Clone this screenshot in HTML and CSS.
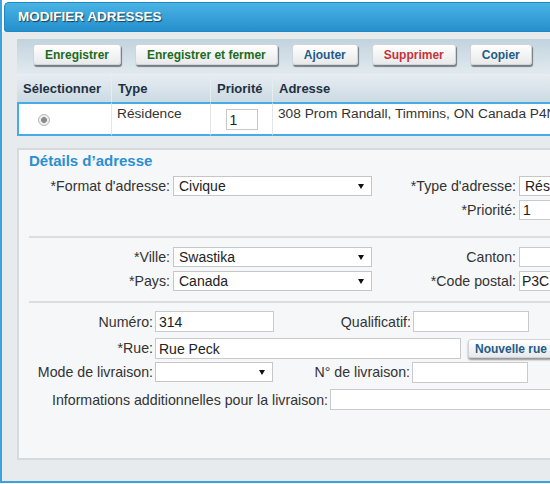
FILE: index.html
```html
<!DOCTYPE html>
<html lang="fr">
<head>
<meta charset="utf-8">
<title>Modifier adresses</title>
<link rel="stylesheet" href="styles.css">
</head>
<body>
<div class="dialog">
  <div class="titlebar">MODIFIER ADRESSES</div>
  <div class="dialog-body">
    <div class="toolbar">
      <button class="btn green">Enregistrer</button>
      <button class="btn green">Enregistrer et fermer</button>
      <button class="btn blue">Ajouter</button>
      <button class="btn red">Supprimer</button>
      <button class="btn blue">Copier</button>
    </div>
    <table class="grid">
      <colgroup>
        <col class="col-sel"><col class="col-type"><col class="col-prio"><col class="col-addr">
      </colgroup>
      <thead>
        <tr><th>Sélectionner</th><th>Type</th><th>Priorité</th><th>Adresse</th></tr>
      </thead>
      <tbody>
        <tr>
          <td class="cell-sel"><span class="radio"></span></td>
          <td class="cell-text">Résidence</td>
          <td class="cell-prio"><input class="prio-input" type="text" value="1"></td>
          <td class="cell-text">308 Prom Randall, Timmins, ON Canada P4N 3A8</td>
        </tr>
      </tbody>
    </table>

    <div class="details">
      <h2 class="details-title">Détails d’adresse</h2>

      <div class="row ga first">
        <div class="lbl l1">*Format d'adresse:</div>
        <div class="select c1"><span>Civique</span><span class="caret"></span></div>
        <div class="lbl l2">*Type d'adresse:</div>
        <div class="select c2"><span>Résidence</span><span class="caret"></span></div>
      </div>
      <div class="row ga next">
        <div class="lbl l2 push">*Priorité:</div>
        <input class="field c2" type="text" value="1">
      </div>

      <div class="sep sep1"></div>

      <div class="row ga first2">
        <div class="lbl l1">*Ville:</div>
        <div class="select c1"><span>Swastika</span><span class="caret"></span></div>
        <div class="lbl l2">Canton:</div>
        <input class="field c2" type="text" value="">
      </div>
      <div class="row ga next">
        <div class="lbl l1">*Pays:</div>
        <div class="select c1"><span>Canada</span><span class="caret"></span></div>
        <div class="lbl l2">*Code postal:</div>
        <input class="field c2 tight" type="text" value="P3C 1X7">
      </div>

      <div class="sep sep2"></div>

      <div class="row gb r5">
        <div class="lbl l1">Numéro:</div>
        <input class="field c1" type="text" value="314">
        <div class="lbl l2">Qualificatif:</div>
        <input class="field c2" type="text" value="">
      </div>
      <div class="row gb r6">
        <div class="lbl l1">*Rue:</div>
        <input class="field street" type="text" value="Rue Peck">
        <button class="btn blue small">Nouvelle rue</button>
      </div>
      <div class="row gb r7">
        <div class="lbl l1">Mode de livraison:</div>
        <div class="select c1 mode"><span></span><span class="caret"></span></div>
        <div class="lbl l2">N° de livraison:</div>
        <input class="field c2" type="text" value="">
      </div>
      <div class="row gb r8">
        <div class="lbl linfo">Informations additionnelles pour la livraison:</div>
        <input class="field info" type="text" value="">
      </div>
    </div>
  </div>
</div>
</body>
</html>
```

FILE: styles.css
```css
html, body {
  margin: 0;
  padding: 0;
  overflow: hidden;
  background: #ffffff;
}

body {
  width: 550px;
  height: 484px;
  font-family: "Liberation Sans", Arial, sans-serif;
}

.dialog {
  width: 700px;
  height: 483px;
  box-sizing: border-box;
  border-left: 2px solid #3ca2dc;
  border-bottom: 2px solid #3ca2dc;
  padding-top: 2px;
  display: flex;
  flex-direction: column;
  background: #ffffff;
}

.titlebar {
  flex: none;
  margin-left: 2px;
  height: 30px;
  box-sizing: border-box;
  border: 1px solid #1f87c2;
  border-right: none;
  border-radius: 5px 0 0 3px;
  background: linear-gradient(#4ab3e4, #2590cd);
  color: #ffffff;
  font-weight: bold;
  font-size: 13.5px;
  line-height: 28px;
  padding-left: 13px;
  text-shadow: 1px 1px 1px rgba(0, 0, 0, 0.6);
}

.dialog-body {
  flex: 1;
  background: #e8ebee;
  padding: 7px 0 0 15px;
}

.toolbar {
  height: 35px;
  box-sizing: border-box;
  padding: 5px 0 0 16px;
  display: flex;
  align-items: flex-start;
  gap: 14px;
  background: linear-gradient(#c1d3de, #e2eaef);
}

.btn {
  height: 21px;
  padding: 0 11px;
  border: 1px solid #cfd5da;
  border-radius: 3px;
  background: linear-gradient(#ffffff, #e8e9ea);
  font: bold 12px "Liberation Sans", Arial, sans-serif;
  box-shadow: 1px 2px 1px rgba(0, 0, 0, 0.45);
  white-space: nowrap;
}

.btn.green { color: #1c6b1f; }
.btn.blue { color: #1f5c87; }
.btn.red { color: #c5323a; }

.btn.small {
  height: 19px;
  margin-left: 7px;
  padding: 0 6px;
  align-self: flex-start;
  margin-top: 1px;
  box-shadow: 0 2px 2px rgba(0, 0, 0, 0.4);
}

.grid {
  border-collapse: separate;
  border-spacing: 0;
  table-layout: fixed;
  width: 683px;
}

.col-sel { width: 94px; }
.col-type { width: 99px; }
.col-prio { width: 62px; }

.grid th {
  height: 28px;
  box-sizing: border-box;
  padding: 0 6px;
  text-align: left;
  font: bold 13px "Liberation Sans", Arial, sans-serif;
  color: #1d3142;
  background: linear-gradient(#e6edf1, #ccdae3);
  border-top: 1px solid #e8eef2;
  border-left: 1px solid #e6edf1;
  white-space: nowrap;
}

.grid th:first-child {
  border-left: none;
  padding-left: 6px;
}

.grid td {
  height: 34px;
  box-sizing: border-box;
  background: #ffffff;
  border-top: 2px solid #45ace6;
  border-bottom: 2px solid #45ace6;
  border-left: 1px solid #e3e6e8;
  font-size: 13.7px;
  color: #333333;
  white-space: nowrap;
  overflow: hidden;
}

.grid td:first-child {
  border-left: 2px solid #45ace6;
}

.cell-text {
  vertical-align: top;
  padding: 2px 5px 0 5px;
  line-height: 16px;
}

.cell-sel {
  padding: 0 0 0 19px;
  vertical-align: middle;
}

.radio {
  display: block;
  width: 12px;
  height: 12px;
  box-sizing: border-box;
  border-radius: 50%;
  border: 1px solid #b4b4b4;
  background: radial-gradient(circle, #8b8b8b 0 2.6px, #e9e9e9 3.2px, #f5f5f5 6px);
  margin-top: 1px;
}

.cell-prio {
  text-align: center;
  vertical-align: middle;
  padding: 1px 0 0 0;
}

.prio-input {
  width: 32px;
  height: 21px;
  box-sizing: border-box;
  border: 1px solid #c8c8c8;
  padding: 0 3px;
  font: 14px "Liberation Sans", Arial, sans-serif;
  color: #222222;
  vertical-align: middle;
}

.details {
  margin-top: 12px;
  height: 312px;
  box-sizing: border-box;
  border: 2px solid #d7dadd;
  border-right: none;
  background: #f6f7f8;
}

.details-title {
  margin: 2px 0 0 10px;
  font: bold 15px/18px "Liberation Sans", Arial, sans-serif;
  color: #2b8fd2;
}

.row {
  display: flex;
  align-items: center;
  height: 20px;
}

.lbl {
  flex: none;
  box-sizing: border-box;
  text-align: right;
  font-size: 14.2px;
  color: #333333;
  white-space: nowrap;
  line-height: 20px;
}

.ga .l1 { width: 154px; padding-right: 3px; }
.ga .c1 { width: 199px; }
.ga .l2 { width: 147px; padding-right: 3px; }
.ga .c2 { width: 130px; }
.ga .push { margin-left: 353px; }

.ga.first { margin-top: 6px; }
.ga.next { margin-top: 4px; }
.ga.first2 { margin-top: 9px; }

.sep {
  height: 2px;
  margin-left: 10px;
  background: #dbdee1;
}

.sep1 { margin-top: 16px; }
.sep2 { margin-top: 10px; }

.gb { height: 21px; }
.gb .l1 { width: 136px; padding-right: 2px; }
.gb .c1 { width: 119px; }
.gb .l2 { width: 139px; padding-right: 2px; }
.gb .c2 { width: 116px; }
.gb .mode { width: 118px; height: 20px; }
.gb .linfo { width: 311px; padding-right: 2px; }

.r5 { margin-top: 8px; }
.r6 { margin-top: 6px; align-items: flex-start; }
.r7 { margin-top: 3px; height: 20px; }
.r8 { margin-top: 7px; }

.select {
  flex: none;
  height: 20px;
  box-sizing: border-box;
  border: 1px solid #c6c6c6;
  background: #ffffff;
  padding: 0 7px 0 5px;
  display: flex;
  align-items: center;
  justify-content: space-between;
  font-size: 14px;
  color: #222222;
  white-space: nowrap;
  overflow: hidden;
}

.caret {
  flex: none;
  width: 0;
  height: 0;
  border-left: 3px solid transparent;
  border-right: 3px solid transparent;
  border-top: 5px solid #111111;
  margin-top: 1px;
}

.field {
  flex: none;
  height: 21px;
  box-sizing: border-box;
  border: 1px solid #cacaca;
  background: #ffffff;
  padding: 0 3px;
  margin: 0;
  font: 14px "Liberation Sans", Arial, sans-serif;
  color: #222222;
}

.ga .field { height: 20px; }
.field.tight { padding: 0 2px; }
.field.street { width: 306px; }
.field.info { width: 260px; }
```
